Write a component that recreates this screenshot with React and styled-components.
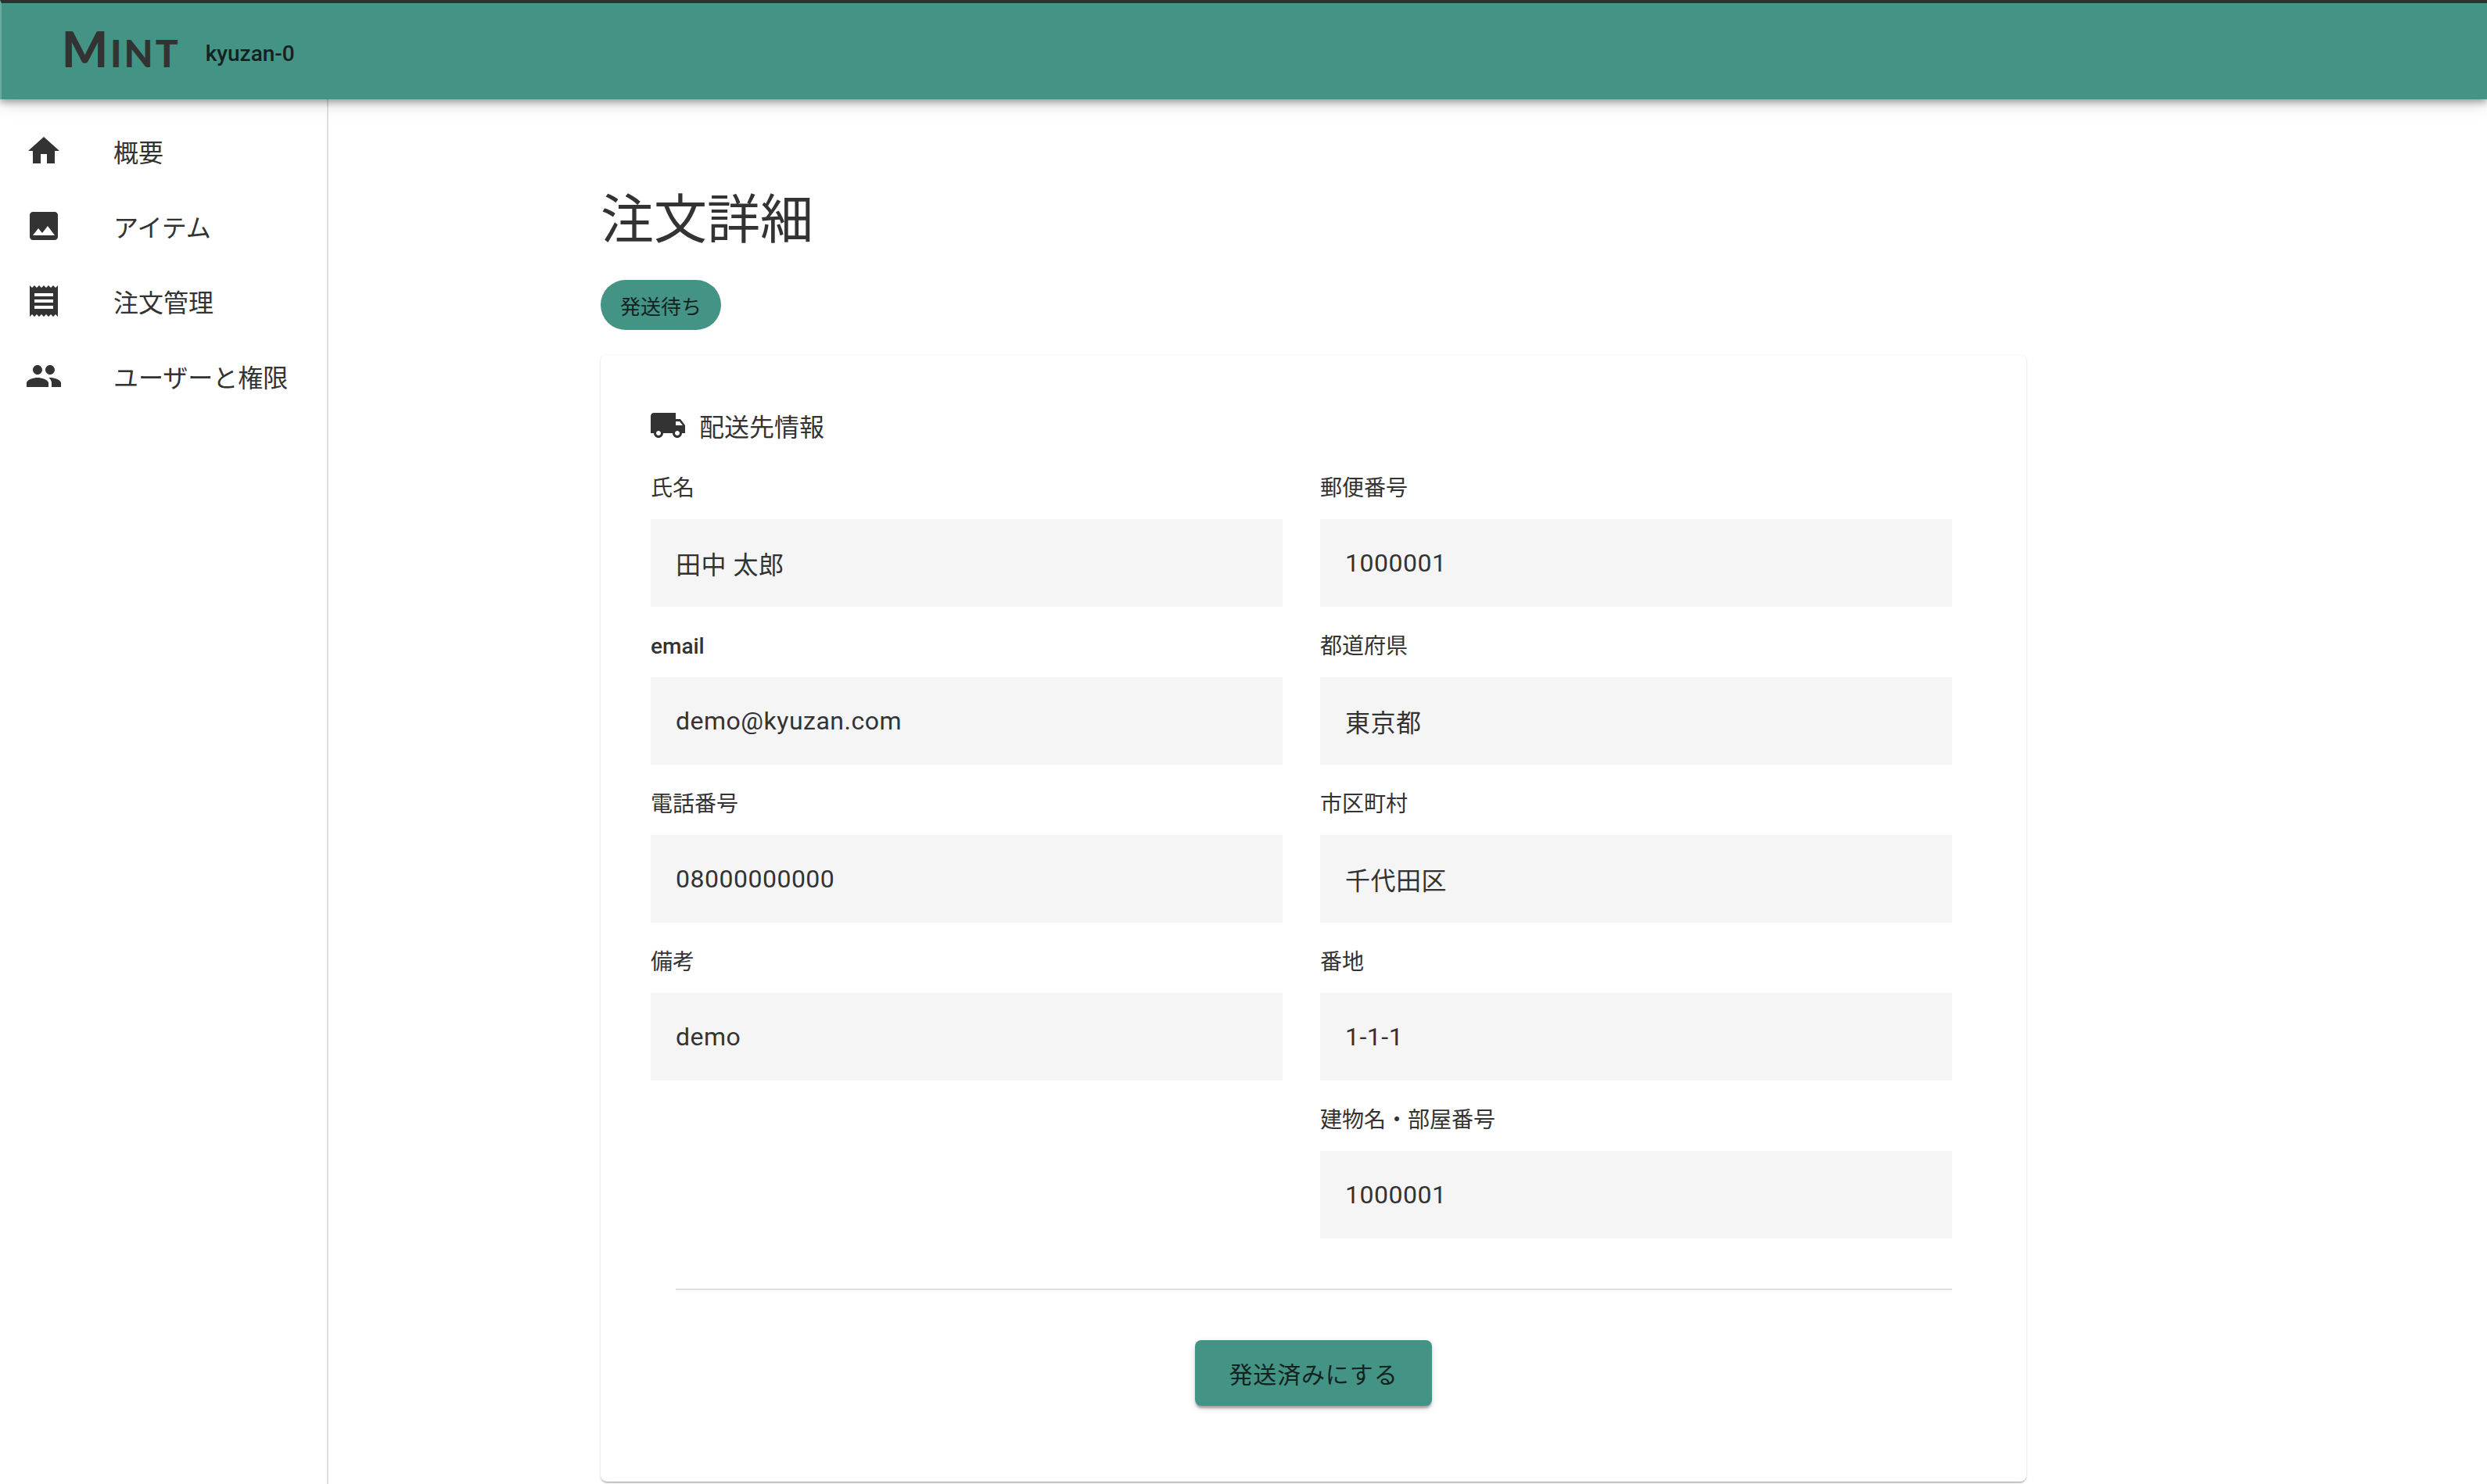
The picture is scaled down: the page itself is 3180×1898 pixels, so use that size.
import React from "react";
import styled, { createGlobalStyle } from "styled-components";
import { MdHome, MdImage, MdReceipt, MdPeople, MdLocalShipping } from "react-icons/md";

const Global = createGlobalStyle`
  html, body {
    margin: 0;
    padding: 0;
    background: #fff;
    color: #333;
    font-family: Roboto, "Noto Sans CJK JP", sans-serif;
  }
  * { box-sizing: border-box; }
`;

const Page = styled.div`
  height: 1898px;
  overflow: hidden;
  display: flex;
  flex-direction: column;
`;

const Header = styled.header`
  height: 127px;
  flex: none;
  position: relative;
  z-index: 2;
  display: flex;
  align-items: center;
  padding-left: 79px;
  gap: 32px;
  background: #439485;
  border-top: 4px solid #303030;
  border-left: 2px solid #6aa99d;
  box-shadow: 0 4px 8px rgba(0, 0, 0, 0.3), 0 8px 20px rgba(0, 0, 0, 0.12);
`;

const Logo = styled.div`
  display: flex;
  align-items: baseline;
  margin-left: -2px;
  font-family: Lato, sans-serif;
  font-weight: 900;
  color: #333;
  font-size: 48px;
  line-height: 1;
  letter-spacing: 3px;
  padding-bottom: 8px;
`;

const LogoCap = styled.span`
  font-size: 62px;
`;

const Account = styled.span`
  font-size: 28px;
  font-weight: 500;
  color: #14221f;
  margin-top: 6px;
`;

const Body = styled.div`
  flex: 1;
  display: flex;
  min-height: 0;
`;

const Sidebar = styled.nav`
  width: 420px;
  flex: none;
  padding-top: 18px;
  border-right: 2px solid #e0e0e0;
`;

const NavItem = styled.div`
  height: 96px;
  display: flex;
  align-items: center;
  gap: 65px;
  padding-left: 32px;
  font-size: 32px;
  color: #333;
  svg {
    width: 48px;
    height: 48px;
    flex: none;
  }
`;

const Main = styled.main`
  flex: 1;
  padding: 114px 0 0 348px;
`;

const Title = styled.h1`
  margin: 0 0 35px;
  font-size: 68px;
  font-weight: 400;
  line-height: 82px;
  color: #333;
`;

const Chip = styled.div`
  width: 154px;
  height: 64px;
  border-radius: 32px;
  background: #439485;
  color: #14221f;
  font-size: 26px;
  display: flex;
  align-items: center;
  justify-content: center;
  margin-bottom: 32px;
`;

const Card = styled.section`
  width: 1823px;
  height: 1441px;
  padding: 66px 95px 0 64px;
  border-radius: 8px;
  background: #fff;
  box-shadow: 0 2px 2px -1px rgba(0, 0, 0, 0.35), 0 1px 3px rgba(0, 0, 0, 0.16);
`;

const CardHead = styled.div`
  height: 48px;
  display: flex;
  align-items: center;
  gap: 16px;
  font-size: 32px;
  margin-bottom: 40px;
  svg {
    width: 48px;
    height: 48px;
    margin-left: -2px;
    flex: none;
  }
`;

const Columns = styled.div`
  display: grid;
  grid-template-columns: 808px 808px;
  column-gap: 48px;
`;

const Column = styled.div`
  display: flex;
  flex-direction: column;
  gap: 34px;
`;

const Field = styled.div`
  display: flex;
  flex-direction: column;
  gap: 22px;
`;

const Label = styled.label`
  font-size: 28px;
  line-height: 34px;
  font-weight: ${(props) => (props.$strong ? 500 : 400)};
`;

const Value = styled.div`
  height: 112px;
  background: #f5f5f5;
  display: flex;
  align-items: center;
  padding-left: 32px;
  font-size: 32px;
  letter-spacing: 0.5px;
  color: #333;
`;

const Divider = styled.hr`
  margin: 64px 0 64px 32px;
  border: 0;
  height: 2px;
  background: #e0e0e0;
`;

const Actions = styled.div`
  display: flex;
  justify-content: center;
  padding-left: 31px;
`;

const Button = styled.button`
  width: 303px;
  height: 84px;
  border: 0;
  border-radius: 8px;
  background: #439485;
  color: #14221f;
  font-family: inherit;
  font-size: 30px;
  letter-spacing: 0.8px;
  box-shadow: 0 4px 3px -1px rgba(0, 0, 0, 0.3), 0 3px 8px rgba(0, 0, 0, 0.14);
`;

const navItems = [
  { icon: MdHome, text: "概要" },
  { icon: MdImage, text: "アイテム" },
  { icon: MdReceipt, text: "注文管理" },
  { icon: MdPeople, text: "ユーザーと権限" },
];

const leftFields = [
  { label: "氏名", value: "田中 太郎" },
  { label: "email", value: "demo@kyuzan.com", strong: true },
  { label: "電話番号", value: "08000000000" },
  { label: "備考", value: "demo" },
];

const rightFields = [
  { label: "郵便番号", value: "1000001" },
  { label: "都道府県", value: "東京都" },
  { label: "市区町村", value: "千代田区" },
  { label: "番地", value: "1-1-1" },
  { label: "建物名・部屋番号", value: "1000001" },
];

const renderField = (f) => (
  <Field key={f.label}>
    <Label $strong={f.strong}>{f.label}</Label>
    <Value>{f.value}</Value>
  </Field>
);

const App = () => {
  return (
    <>
      <Global />
      <Page>
        <Header>
          <Logo>
            <LogoCap>M</LogoCap>INT
          </Logo>
          <Account>kyuzan-0</Account>
        </Header>
        <Body>
          <Sidebar>
            {navItems.map((item) => (
              <NavItem key={item.text}>
                <item.icon />
                <span>{item.text}</span>
              </NavItem>
            ))}
          </Sidebar>
          <Main>
            <Title>注文詳細</Title>
            <Chip>発送待ち</Chip>
            <Card>
              <CardHead>
                <MdLocalShipping />
                <span>配送先情報</span>
              </CardHead>
              <Columns>
                <Column>{leftFields.map(renderField)}</Column>
                <Column>{rightFields.map(renderField)}</Column>
              </Columns>
              <Divider />
              <Actions>
                <Button>発送済みにする</Button>
              </Actions>
            </Card>
          </Main>
        </Body>
      </Page>
    </>
  );
};

export default App;
